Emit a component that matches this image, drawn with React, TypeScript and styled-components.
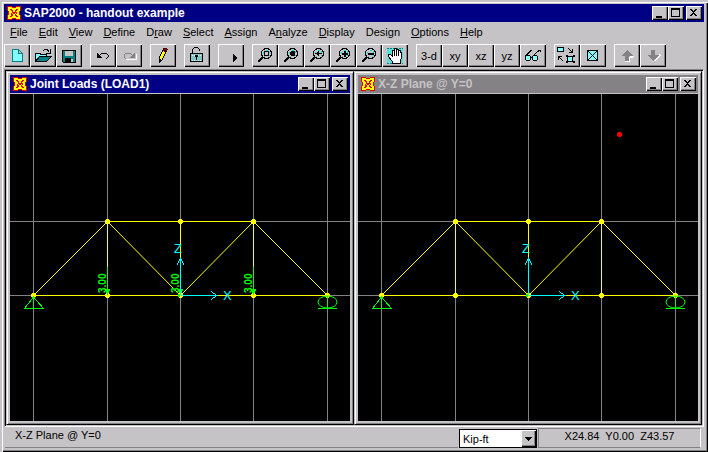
import React from "react";
import styled, { createGlobalStyle, css } from "styled-components";

const face = "#c6c3c6";
const shade = "#848284";
const navy = "#000084";

const GlobalStyle = createGlobalStyle`
  * { box-sizing: border-box; }
  body {
    margin: 0;
    background: ${face};
    color: #000;
    font: 11px/14px "Liberation Sans", Arial, sans-serif;
  }
  button, select { font: inherit; color: inherit; margin: 0; padding: 0; border: 0; border-radius: 0; }
  svg { display: block; }
`;

const raisedFrame = css`
  border: 1px solid;
  border-color: ${face} #000 #000 ${face};
  box-shadow: inset 1px 1px #fff, inset -1px -1px ${shade};
`;

const raisedButton = css`
  background: ${face};
  box-shadow: inset 1px 1px #fff, inset -1px -1px #000, inset -2px -2px ${shade};
`;

const AppWindow = styled.div`
  min-height: 100vh;
  display: flex;
  flex-direction: column;
  padding: 4px 4px 3px;
  background: ${face};
  box-shadow: inset 2px 2px ${face}, inset 3px 3px #fff, inset -1px -1px #000, inset -2px -2px ${shade};
`;

const TitleBar = styled.header<{ $active: boolean }>`
  height: 18px;
  flex: none;
  display: flex;
  align-items: center;
  gap: 2px;
  padding: 0 2px;
  background: ${(p) => (p.$active ? navy : shade)};
  color: ${(p) => (p.$active ? "#fff" : face)};
`;

const Title = styled.h1`
  flex: 1;
  min-width: 0;
  margin: 0;
  font-size: 12px;
  line-height: 16px;
  font-weight: bold;
  white-space: nowrap;
  overflow: hidden;
`;

const WindowControls = styled.div`
  display: flex;
  & > :last-child { margin-left: 2px; }
`;

const ControlButton = styled.button`
  ${raisedButton}
  width: 16px;
  height: 14px;
`;

const MenuBar = styled.nav`
  display: flex;
  flex: none;
  gap: 11px;
  height: 22px;
  align-items: center;
  padding: 0 6px 2px;
`;

const MenuItem = styled.button`
  background: none;
  white-space: nowrap;
  u { text-underline-offset: 1px; }
`;

const ToolBar = styled.div`
  display: flex;
  flex: none;
  gap: 8px;
  height: 25px;
`;

const ToolGroup = styled.div`
  display: flex;
`;

const ToolButton = styled.button`
  ${raisedButton}
  width: 26px;
  height: 23px;
  display: grid;
  place-items: center;
`;

const Workspace = styled.main`
  flex: 1;
  display: grid;
  grid-template-columns: 1fr 1fr;
  min-height: 200px;
  padding: 1px;
  border: 1px solid;
  border-color: ${shade} #fff #fff ${shade};
  box-shadow: inset 1px 1px #000, inset -1px -1px ${face};
`;

const ChildWindow = styled.section`
  ${raisedFrame}
  background: ${face};
  display: flex;
  flex-direction: column;
  min-width: 0;
  padding: 3px;
`;

const Canvas = styled.div`
  flex: 1;
  min-height: 0;
  margin-top: 1px;
  display: grid;
  background: #000;
`;

const Drawing = styled.svg`
  width: 100%;
  height: 100%;
  min-height: 0;
`;

const StatusBar = styled.footer`
  flex: none;
  display: grid;
  grid-template-columns: 1fr 78px 163px;
  column-gap: 1px;
  height: 22px;
  padding: 1px 3px 1px 1px;
`;

const StatusText = styled.div`
  padding: 0 10px;
  line-height: 15px;
  border-bottom: 1px solid ${shade};
`;

const UnitsBox = styled.div`
  position: relative;
  display: grid;
  border: 1px solid #000;
  margin-top: 1px;
  background: #fff;
`;

const UnitsSelect = styled.select`
  appearance: none;
  background: #fff;
  padding: 0 18px 0 3px;
  line-height: 16px;
`;

const UnitsArrow = styled.span`
  ${raisedButton}
  position: absolute;
  top: 0;
  right: 0;
  bottom: 0;
  width: 15px;
  display: grid;
  place-items: center;
  pointer-events: none;
`;

const Coordinates = styled.div`
  border: 1px solid;
  border-color: ${shade} #fff ${shade} ${shade};
  text-align: center;
  line-height: 15px;
  white-space: pre;
`;

function AppIcon() {
  return (
    <svg width="16" height="16" viewBox="0 0 16 16" shapeRendering="crispEdges" aria-hidden="true">
      <path d="M1.500 1.500h3l3 1h1l3-1h3v3l-1 3v1l1 3v3h-3l-3-1h-1l-3 1h-3v-3l1-3v-1l-1-3z" fill="#ffff00" stroke="#e00000" />
      <path d="M4 4h2v1h1v2H6V6H5V5H4zM10 4h2v1h-1v1h-1v1h1v2h-1V8H9v1H7V8H6v2H5V8h1V7h3V5h1zM6 9h1v2H6v1H4v-1h1v-1h1zM9 9h1v1h1v1h1v1h-2v-1H9z" fill="#e00000" />
    </svg>
  );
}

const controlShapes = {
  Minimize: <path d="M4 10h6v2H4z" />,
  Maximize: <path d="M3 2h9v9H3zM4 4v6h7V4z" fillRule="evenodd" />,
  Close: <path d="M4 3h2v1h1v1h1V4h1V3h2v1h-1v1H9v1H8v1h1v1h1v1h1v1H9V9H8V8H7v1H6v1H4V9h1V8h1V7h1V6H6V5H5V4H4z" />,
};

function Controls() {
  return (
    <WindowControls>
      {Object.entries(controlShapes).map(([name, shape]) => (
        <ControlButton key={name} aria-label={name}>
          <svg width="16" height="14" viewBox="0 0 16 14" shapeRendering="crispEdges">{shape}</svg>
        </ControlButton>
      ))}
    </WindowControls>
  );
}

function Lens({ children }: { children: React.ReactNode }) {
  return (
    <>
      <path d="M11 13l-5 5" stroke="#000" strokeWidth="2" />
      <circle cx="14.5" cy="9.5" r="5" fill={face} stroke="#000" />
      <path d="M14 6h2M11 8v2M17 7l1 2M12 12l1 1M17 11h1" stroke="#00e0e0" />
      {children}
    </>
  );
}

const cyan = "#84ffff";
const teal = "#008284";

const icons: Record<string, React.ReactNode> = {
  "New model": <path d="M8.500 5.500h6l4 4v8h-10zM14.500 5.500v4h4" fill={cyan} stroke={teal} />,
  "Open": (
    <>
      <path d="M5.500 17v-8h4l1 1h6v3" fill={cyan} stroke="#000" />
      <path d="M5.500 17.500l4-5h12l-5 5z" fill={teal} stroke="#000" />
      <path d="M13 7l2-2h2l2 3M20 5v4h-4" fill="none" stroke="#000" />
    </>
  ),
  "Save": (
    <>
      <path d="M6.500 6.500h13v12h-12l-1-1z" fill={teal} stroke="#000" />
      <path d="M9 7h8v5H9zM15 15h2v3h-2z" fill={face} />
      <path d="M9 14h6v5H9z" />
    </>
  ),
  "Undo": (
    <>
      <path d="M7 9v5h5v-1h-1v-1h-1v-1H9v-1H8V9z" />
      <path d="M10 11l2-2h4l2 2v2l-2 2" fill="none" stroke="#000" />
    </>
  ),
  "Redo": (
    <>
      <path d="M20 10v5h-5M17 16l-7-1" fill="none" stroke="#fff" />
      <path d="M19 9v5h-5v-1h1v-1h1v-1h1v-1h1V9z" fill={shade} />
      <path d="M16 11l-2-2h-4l-2 2v2l2 2" fill="none" stroke={shade} />
    </>
  ),
  "Draw": (
    <>
      <path d="M9 14l4-8 3 2-4 8-3 2z" fill="#ffff00" stroke="#000" />
      <path d="M13 6l1-2h2l1 1v1l-1 2z" fill="#840000" stroke="#400" />
      <path d="M9 15h2v2l-2 2z" />
    </>
  ),
  "Lock model": (
    <>
      <path d="M8.500 9V5.500l2-2h3l2 2v1" fill="none" stroke="#000" />
      <path d="M6.500 9.500h12v8h-12z" fill="#84c3c6" stroke="#000" />
      <path d="M8 11h9M8 16h9" stroke="#cff" strokeDasharray="1 1" />
      <path d="M11 11h3v2h-1v3h-1v-3h-1z" />
    </>
  ),
  "Run": <path d="M15 10h1v1h1v1h1v1h1v2h-1v1h-1v1h-1v1h-1z" />,
  "Zoom window": <Lens><path d="M12.500 7.500h4v4h-4z" fill={face} stroke="#000" /></Lens>,
  "Restore full view": <Lens><path d="M13 7h3l1 1v3l-1 1h-3l-1-1V8z" /></Lens>,
  "Previous zoom": <Lens><path d="M11 9h2V8h1V7h1v2h3v1h-3v2h-1v-1h-1v-1h-2z" /></Lens>,
  "Zoom in": <Lens><path d="M14 7h2v2h2v2h-2v2h-2v-2h-2V9h2z" /></Lens>,
  "Zoom out": <Lens><path d="M12 9h6v2h-6z" /></Lens>,
  "Pan": (
    <>
      <path d="M5 4h16v15H5z" fill="#5adfdf" />
      <path d="M5 4h16M5 19h16" stroke={teal} strokeDasharray="2 1" />
      <path d="M10 19v-2l-4-5v-2h2l2 2V6h2V4h2v1h2v1h2v2h1v7l-1 2v2z" fill="#fff" stroke="#000" />
      <path d="M12.500 6v6M14.500 6v6M16.500 7v5" stroke="#000" />
    </>
  ),
  "Perspective": (
    <>
      <path d="M5.500 12l5-5 1-1M13 12l4-4 3-2 1 2" fill="none" stroke="#000" />
      <path d="M5.500 12.500l1-1h3l1 1v3l-1 1h-3l-1-1zM12.500 12.500l1-1h3l1 1v3l-1 1h-3l-1-1zM10.500 13.500h2" fill={cyan} stroke="#000" />
    </>
  ),
  "Shrink elements": (
    <>
      <path d="M3.500 3.500h6v4h-6z" fill={cyan} stroke="#000" />
      <path d="M14 4l4 4M18.500 5v3.500H15M9 17l-4-4M4.500 16v-3.500H8" fill="none" stroke="#000" />
      <path d="M12 11h2v2h-2zM19 11h2v2h-2zM12 17h2v2h-2zM19 17h2v2h-2z" />
      <path d="M13.500 12.500h5v5h-5z" fill={cyan} stroke="#000" />
    </>
  ),
  "Set elements": <path d="M7.500 6.500h10v10h-10zM8 7l9 9M17 7l-9 9" fill={cyan} stroke="#000" />,
  "Move up": (
    <>
      <path d="M15 18v-5h4M11 17.500h5M20 12l-4 0" stroke="#fff" fill="none" />
      <path d="M13 6h1v1h1v1h1v1h1v1h1v1h1v1h-4v5h-4v-5H8v-1h1v-1h1V9h1V8h1V7h1z" fill={shade} />
    </>
  ),
  "Move down": (
    <>
      <path d="M20 11l-6 6" stroke="#fff" strokeWidth="2" />
      <path d="M11 6h4v5h4v1h-1v1h-1v1h-1v1h-1v1h-1v1h-1v-1h-1v-1h-1v-1h-1v-1H9v-1H8v-1h3z" fill={shade} />
    </>
  ),
};

const toolGroups = [
  ["New model", "Open", "Save"],
  ["Undo", "Redo"],
  ["Draw"],
  ["Lock model"],
  ["Run"],
  ["Zoom window", "Restore full view", "Previous zoom", "Zoom in", "Zoom out", "Pan"],
  ["3-d", "xy", "xz", "yz", "Perspective"],
  ["Shrink elements", "Set elements"],
  ["Move up", "Move down"],
];

const menus: [string, string, string][] = [
  ["", "F", "ile"], ["", "E", "dit"], ["", "V", "iew"], ["", "D", "efine"],
  ["D", "r", "aw"], ["", "S", "elect"], ["", "A", "ssign"], ["A", "n", "alyze"],
  ["", "D", "isplay"], ["Desi", "g", "n"], ["", "O", "ptions"], ["", "H", "elp"],
];

const gridX = [23, 97, 170, 243, 317];
const top = 127;
const base = 201;
const joints = [[23, base], [97, base], [170, base], [243, base], [317, base], [97, top], [170, top], [243, top]];
const diagonals = [[23, base, 97, top], [97, top, 170, base], [170, base, 243, top], [243, top, 317, base]];

function LoadArrow({ x }: { x: number }) {
  return (
    <g fill="#00ff00">
      <rect x={x} y="173" width="1" height="28" />
      <path d={`M${x - 2} 195h5v2h-1v2h-1v2h-1v-2h-1v-2h-1z`} />
      <text transform={`translate(${x - 1} 199) rotate(-90)`} fontSize="10" fontWeight="bold">3.00</text>
    </g>
  );
}

function TrussView({ loads, marker }: { loads?: boolean; marker?: boolean }) {
  return (
    <Drawing shapeRendering="crispEdges" role="img" aria-label="Truss elevation">
      <g fill={shade}>
        {gridX.map((x) => <rect key={x} x={x} y="0" width="1" height="100%" />)}
        {[top, base].map((y) => <rect key={y} x="0" y={y} width="100%" height="1" />)}
      </g>
      <g fill="#ffff00">
        <rect x="23" y={base} width="295" height="1" />
        <rect x="97" y={top} width="147" height="1" />
        {[97, 170, 243].map((x) => <rect key={x} x={x} y={top} width="1" height={base - top} />)}
      </g>
      <g stroke="#ffff00" shapeRendering="auto">
        {diagonals.map(([x1, y1, x2, y2]) => (
          <line key={x1} x1={x1 + 0.5} y1={y1 + 0.5} x2={x2 + 0.5} y2={y2 + 0.5} />
        ))}
      </g>
      {joints.map(([x, y]) => (
        <path key={`${x}-${y}`} d={`M${x - 1} ${y - 2}h3v1h1v3h-1v1h-3v-1h-1v-3h1z`} fill="#ffff00" />
      ))}
      {loads && [97, 170, 243].map((x) => <LoadArrow key={x} x={x} />)}
      <g stroke="#00ff00" fill="none">
        <path d="M23.500 202v12M23.500 203l-9 11.500h19z" />
        <path d="M317.500 202v12M308 214.500h19" />
        <ellipse cx="317.500" cy="208" rx="9.500" ry="6" shapeRendering="auto" />
      </g>
      <g stroke="#00ffff" fill="none">
        <path d="M170.500 201V164M171 201.500h36" />
        <path d="M167 171l3.500-7 3.500 7M201 197.500l6 4-6 4" />
      </g>
      <g fill="#00ffff" fontSize="13">
        <text x="164" y="159">Z</text>
        <text x="213" y="206">X</text>
      </g>
      <path d="M168 200h2v3h-2z" fill="#00ff00" />
      {marker && <circle cx="261.500" cy="40.500" r="2.500" fill="#ff0000" />}
    </Drawing>
  );
}

function ModelWindow({ title, active, children }: { title: string; active: boolean; children: React.ReactNode }) {
  return (
    <ChildWindow aria-label={title}>
      <TitleBar $active={active}>
        <AppIcon />
        <Title as="h2">{title}</Title>
        <Controls />
      </TitleBar>
      <Canvas>{children}</Canvas>
    </ChildWindow>
  );
}

export default function App() {
  return (
    <>
      <GlobalStyle />
      <AppWindow>
        <TitleBar $active>
          <AppIcon />
          <Title>SAP2000 - handout example</Title>
          <Controls />
        </TitleBar>
        <MenuBar aria-label="Main menu">
          {menus.map(([before, key, after]) => (
            <MenuItem key={before + key + after}>{before}<u>{key}</u>{after}</MenuItem>
          ))}
        </MenuBar>
        <ToolBar role="toolbar" aria-label="Tools">
          {toolGroups.map((group) => (
            <ToolGroup key={group[0]}>
              {group.map((name) => (
                <ToolButton key={name} aria-label={name}>
                  {icons[name] ? (
                    <svg width="26" height="23" viewBox="0 0 26 23" shapeRendering="crispEdges">{icons[name]}</svg>
                  ) : name}
                </ToolButton>
              ))}
            </ToolGroup>
          ))}
        </ToolBar>
        <Workspace>
          <ModelWindow title="Joint Loads (LOAD1)" active><TrussView loads /></ModelWindow>
          <ModelWindow title="X-Z Plane @ Y=0" active={false}><TrussView marker /></ModelWindow>
        </Workspace>
        <StatusBar>
          <StatusText>X-Z Plane @ Y=0</StatusText>
          <UnitsBox>
            <UnitsSelect aria-label="Units" defaultValue="Kip-ft">
              <option>Kip-ft</option>
            </UnitsSelect>
            <UnitsArrow>
              <svg width="7" height="4" viewBox="0 0 7 4" shapeRendering="crispEdges"><path d="M0 0h7v1H6v1H5v1H4v1H3V3H2V2H1V1H0z" /></svg>
            </UnitsArrow>
          </UnitsBox>
          <Coordinates>{"X24.84  Y0.00  Z43.57"}</Coordinates>
        </StatusBar>
      </AppWindow>
    </>
  );
}
